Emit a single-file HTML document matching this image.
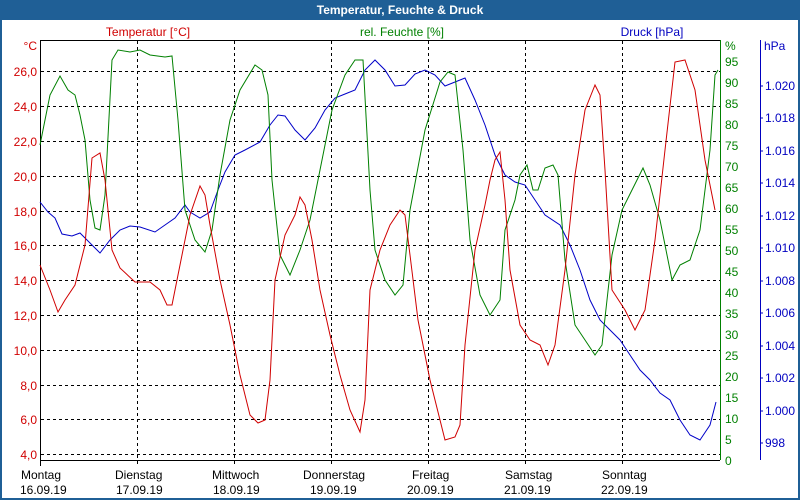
<!DOCTYPE html>
<html><head><meta charset="utf-8"><style>
html,body{margin:0;padding:0;width:800px;height:500px;overflow:hidden;background:#fff}
svg{display:block;font-family:"Liberation Sans",sans-serif}
</style></head><body>
<svg width="800" height="500" viewBox="0 0 800 500" xmlns="http://www.w3.org/2000/svg">
<rect x="0" y="0" width="800" height="500" fill="#1f5f96"/>
<rect x="2" y="20" width="796" height="478" fill="#fff"/>
<text x="400" y="14" fill="#fff" font-size="12" font-weight="bold" text-anchor="middle">Temperatur, Feuchte &amp; Druck</text>
<g font-size="12">
<text x="148" y="36" fill="#d00000" text-anchor="middle">Temperatur [°C]</text>
<text x="402" y="36" fill="#008000" text-anchor="middle">rel. Feuchte [%]</text>
<text x="652" y="36" fill="#0000c0" text-anchor="middle">Druck [hPa]</text>
</g>
<g stroke="#000" stroke-dasharray="3,3" stroke-width="1">
<line x1="41" y1="71.5" x2="720" y2="71.5"/><line x1="41" y1="106.5" x2="720" y2="106.5"/>
<line x1="41" y1="141.5" x2="720" y2="141.5"/><line x1="41" y1="176.5" x2="720" y2="176.5"/>
<line x1="41" y1="211.5" x2="720" y2="211.5"/><line x1="41" y1="245.5" x2="720" y2="245.5"/>
<line x1="41" y1="280.5" x2="720" y2="280.5"/><line x1="41" y1="315.5" x2="720" y2="315.5"/>
<line x1="41" y1="350.5" x2="720" y2="350.5"/><line x1="41" y1="385.5" x2="720" y2="385.5"/>
<line x1="41" y1="419.5" x2="720" y2="419.5"/><line x1="41" y1="454.5" x2="720" y2="454.5"/>
<line x1="137.5" y1="41" x2="137.5" y2="466"/><line x1="234.5" y1="41" x2="234.5" y2="466"/>
<line x1="331.5" y1="41" x2="331.5" y2="466"/><line x1="428.5" y1="41" x2="428.5" y2="466"/>
<line x1="525.5" y1="41" x2="525.5" y2="466"/><line x1="622.5" y1="41" x2="622.5" y2="466"/>
</g>
<path d="M40.5 40.5H720M40.5 40V466M40 460.5H720" stroke="#000" fill="none"/>
<line x1="720.5" y1="40" x2="720.5" y2="460" stroke="#008000"/>
<line x1="760.5" y1="40" x2="760.5" y2="460" stroke="#0000c0"/>
<g font-size="12" fill="#d00000" text-anchor="end">
<text x="37" y="50">°C</text><text x="37" y="76">26,0</text><text x="37" y="111">24,0</text>
<text x="37" y="146">22,0</text><text x="37" y="181">20,0</text><text x="37" y="216">18,0</text>
<text x="37" y="250">16,0</text><text x="37" y="285">14,0</text><text x="37" y="320">12,0</text>
<text x="37" y="355">10,0</text><text x="37" y="390">8,0</text><text x="37" y="424">6,0</text>
<text x="37" y="459">4,0</text></g>
<g font-size="12" fill="#008000">
<text x="725" y="50">%</text><text x="725" y="66">95</text><text x="725" y="87">90</text><text x="725" y="108">85</text>
<text x="725" y="129">80</text><text x="725" y="150">75</text><text x="725" y="171">70</text><text x="725" y="192">65</text>
<text x="725" y="213">60</text><text x="725" y="234">55</text><text x="725" y="255">50</text><text x="725" y="276">45</text>
<text x="725" y="297">40</text><text x="725" y="318">35</text><text x="725" y="339">30</text><text x="725" y="360">25</text>
<text x="725" y="381">20</text><text x="725" y="402">15</text><text x="725" y="423">10</text><text x="725" y="444">5</text>
<text x="725" y="465">0</text></g>
<g font-size="12" fill="#0000c0">
<text x="764" y="50">hPa</text><text x="765" y="90">1.020</text><text x="765" y="122">1.018</text><text x="765" y="155">1.016</text>
<text x="765" y="187">1.014</text><text x="765" y="220">1.012</text><text x="765" y="252">1.010</text><text x="765" y="285">1.008</text>
<text x="765" y="317">1.006</text><text x="765" y="350">1.004</text><text x="765" y="382">1.002</text><text x="765" y="415">1.000</text>
<text x="765" y="447">998</text></g>
<g stroke="#0000c0"><path d="M760 86h3M760 118h3M760 151h3M760 183h3M760 216h3M760 248h3M760 281h3M760 313h3M760 346h3M760 378h3M760 411h3M760 443h3"/></g>
<g font-size="12" fill="#000">
<text x="21" y="479">Montag</text><text x="20" y="494">16.09.19</text>
<text x="115" y="479">Dienstag</text><text x="116" y="494">17.09.19</text>
<text x="212" y="479">Mittwoch</text><text x="213" y="494">18.09.19</text>
<text x="303" y="479">Donnerstag</text><text x="310" y="494">19.09.19</text>
<text x="412" y="479">Freitag</text><text x="407" y="494">20.09.19</text>
<text x="505" y="479">Samstag</text><text x="504" y="494">21.09.19</text>
<text x="602" y="479">Sonntag</text><text x="601" y="494">22.09.19</text>
</g>
<polyline fill="none" stroke="#0000c8" points="40,202 48,212 55,218 62,234 72,236 80,233 90,243 100,253 110,240 120,230 130,226 140,227 155,232 165,225 175,218 185,205 190,212 200,218 210,212 218,190 225,172 235,155 245,150 260,142 270,125 278,115 285,116 295,130 305,140 315,128 325,110 335,98 345,94 355,90 365,70 375,60 385,70 395,86 405,85 415,74 425,70 435,75 445,86 455,82 465,78 475,100 485,125 495,155 505,175 515,182 525,185 535,200 545,215 560,225 570,245 580,270 590,300 600,320 610,330 620,340 630,355 640,370 650,380 660,393 670,400 680,420 690,435 700,440 710,425 716,402"/>
<polyline fill="none" stroke="#008000" points="40,145 50,95 60,76 68,90 75,95 80,115 85,140 90,200 95,228 100,230 105,195 112,60 118,50 130,52 140,50 150,55 165,57 172,56 178,120 185,210 195,240 205,252 212,230 220,175 230,120 240,90 255,65 262,70 268,95 272,180 280,255 290,275 300,250 310,220 320,170 332,110 345,75 355,60 363,60 370,190 375,250 385,280 395,295 403,285 410,210 425,130 440,82 448,72 455,75 463,150 470,240 480,295 490,315 500,300 505,230 515,200 520,175 527,165 533,190 538,190 545,168 553,165 558,175 565,260 575,325 585,340 595,355 602,345 612,255 622,210 632,190 643,168 650,185 660,220 665,245 672,280 680,265 690,260 700,230 710,150 715,75 718,70"/>
<polyline fill="none" stroke="#d00000" points="40,265 50,290 58,312 65,300 75,285 85,245 92,158 100,153 105,180 112,250 120,268 135,282 150,282 160,290 167,305 172,305 180,265 190,215 200,186 205,195 210,225 220,280 230,325 240,375 250,415 258,423 265,420 270,380 275,280 285,235 295,215 300,197 305,205 312,240 320,290 330,335 340,375 350,410 360,432 365,400 370,290 380,250 390,225 400,210 405,215 410,255 418,320 430,380 440,420 445,440 455,437 460,425 465,345 475,250 485,205 490,180 495,160 500,152 505,200 510,270 520,325 530,340 540,345 548,365 555,345 565,270 575,175 585,110 595,85 600,95 605,170 612,290 625,310 635,330 645,310 655,240 665,150 675,62 685,60 695,90 705,160 715,210"/>
</svg>
</body></html>
